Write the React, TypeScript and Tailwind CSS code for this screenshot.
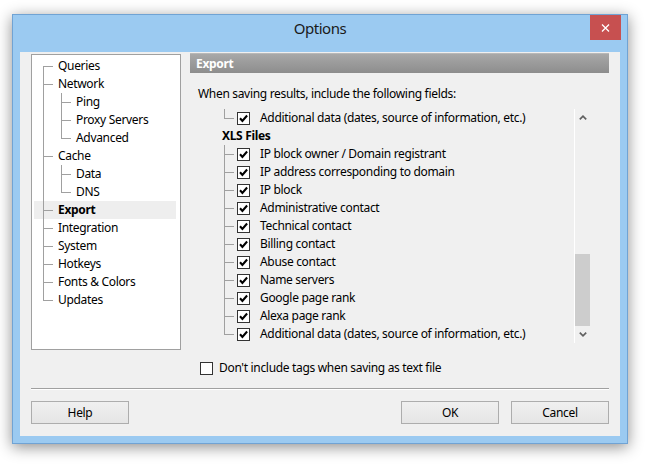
import React from 'react';

const line = 'absolute bg-[#a0a0a0]';

function Branch({ up = true, down = true, tick = true, w }: { up?: boolean; down?: boolean; tick?: boolean; w: string }) {
  return (
    <div className={`relative h-full shrink-0 ${w}`}>
      {up && <span className={`${line} left-0 top-0 h-1/2 w-px`} />}
      {down && <span className={`${line} left-0 top-1/2 h-1/2 w-px`} />}
      {tick && <span className={`${line} left-0 top-1/2 h-px w-[10px]`} />}
    </div>
  );
}

function Check({ checked = true }: { checked?: boolean }) {
  return (
    <div className="w-[13px] h-[13px] shrink-0 border border-[#333333] bg-white flex items-center justify-center">
      {checked && (
        <svg width="11" height="11" viewBox="0 0 11 11">
          <polyline points="2,5.2 4.4,7.9 9.1,2.5" fill="none" stroke="#000" strokeWidth="2.1" />
        </svg>
      )}
    </div>
  );
}

type TreeNode = { label: string; children?: string[] };

const tree: TreeNode[] = [
  { label: 'Queries' },
  { label: 'Network', children: ['Ping', 'Proxy Servers', 'Advanced'] },
  { label: 'Cache', children: ['Data', 'DNS'] },
  { label: 'Export' },
  { label: 'Integration' },
  { label: 'System' },
  { label: 'Hotkeys' },
  { label: 'Fonts & Colors' },
  { label: 'Updates' },
];

const xlsFields = [
  'IP block owner / Domain registrant',
  'IP address corresponding to domain',
  'IP block',
  'Administrative contact',
  'Technical contact',
  'Billing contact',
  'Abuse contact',
  'Name servers',
  'Google page rank',
  'Alexa page rank',
  'Additional data (dates, source of information, etc.)',
];

function TreePanel() {
  return (
    <div className="mt-px w-[150px] h-[296px] shrink-0 border border-[#a0a0a0] bg-white pt-[2px]">
      {tree.map((node, i) => {
        const first = i === 0;
        const last = i === tree.length - 1;
        const selected = node.label === 'Export';
        return (
          <React.Fragment key={node.label}>
            <div className={`ml-[2px] mr-[4px] h-[18px] flex items-center pl-[9px] ${selected ? 'bg-[#eeeeee]' : ''}`}>
              <Branch up={!first} down={!last} w="w-[15px]" />
              <span className={selected ? 'font-bold' : ''}>{node.label}</span>
            </div>
            {node.children?.map((c, j) => (
              <div key={c} className="ml-[2px] mr-[4px] h-[18px] flex items-center pl-[9px]">
                <Branch tick={false} w="w-[18px]" />
                <Branch down={j < node.children!.length - 1} w="w-[15px]" />
                <span>{c}</span>
              </div>
            ))}
          </React.Fragment>
        );
      })}
    </div>
  );
}

function FieldRow({ label, lastChild }: { label: string; lastChild?: boolean }) {
  return (
    <div className="h-[18px] flex items-center pl-[34px]">
      <Branch down={!lastChild} w="w-[13px]" />
      <Check />
      <span className="ml-[10px] whitespace-nowrap">{label}</span>
    </div>
  );
}

function Scrollbar() {
  return (
    <div className="w-[16px] shrink-0 border-l border-white flex flex-col">
      <div className="h-[17px] flex items-center justify-center">
        <svg width="8" height="5" viewBox="0 0 8 5">
          <path d="M0.8 4.4 L4 1.2 L7.2 4.4" fill="none" stroke="#606060" strokeWidth="1.7" />
        </svg>
      </div>
      <div className="flex-1 flex flex-col justify-end">
        <div className="h-[72px] bg-[#cdcdcd]" />
      </div>
      <div className="h-[17px] flex items-center justify-center">
        <svg width="8" height="5" viewBox="0 0 8 5">
          <path d="M0.8 0.6 L4 3.8 L7.2 0.6" fill="none" stroke="#606060" strokeWidth="1.7" />
        </svg>
      </div>
    </div>
  );
}

function Button({ children }: { children: React.ReactNode }) {
  return (
    <div className="w-[98px] h-[23px] border border-[#adadad] bg-linear-to-b from-[#f0f0f0] to-[#e5e5e5] flex items-center justify-center">
      {children}
    </div>
  );
}

export default function App() {
  return (
    <div className="relative w-[648px] h-[464px] overflow-hidden bg-white pl-[12px] pt-[14px] font-['Noto_Sans','Open_Sans',sans-serif] text-[12px] leading-[18px] tracking-[-0.32px] text-black">
      <div className="relative w-[616px] h-[430px] border border-[#70a3d4] bg-[#9bcaf1] flex flex-col shadow-[0_3px_14px_rgba(0,0,0,0.45)]">
        {/* title bar */}
        <div className="h-[37px] shrink-0 pt-[3px] text-center text-[15px] leading-[20px] tracking-[-0.5px] text-[#1a1a1a]">
          Options
        </div>
        <div className="absolute top-0 right-[6px] w-[31px] h-[25px] bg-[#c75050] flex items-center justify-center">
          <svg width="9" height="8" viewBox="0 0 9 8">
            <path d="M1 0.5 L8 7.5 M8 0.5 L1 7.5" stroke="#fff" strokeWidth="1.3" />
          </svg>
        </div>

        {/* client */}
        <div className="flex-1 mx-[7px] mb-[7px] bg-[#f0f0f0] px-[11px] pt-px flex flex-col">
          <div className="flex gap-[9px] items-start">
            <TreePanel />

            <div className="w-[419px] shrink-0">
              <div className="h-[20px] border-t border-[#b8b8b8] bg-linear-to-b from-[#a8a8a8] to-[#8d8d8d] pl-[6px] text-white font-bold leading-[19px]">
                Export
              </div>
              <div className="mt-[12px] pl-[8px]">When saving results, include the following fields:</div>

              <div className="mt-[6px] w-[400px] h-[234px] flex">
                <div className="flex-1 overflow-hidden">
                  <FieldRow label="Additional data (dates, source of information, etc.)" lastChild />
                  <div className="h-[18px] flex items-center pl-[32px] font-bold">XLS Files</div>
                  {xlsFields.map((f, i) => (
                    <FieldRow key={f} label={f} lastChild={i === xlsFields.length - 1} />
                  ))}
                </div>
                <Scrollbar />
              </div>

              <div className="mt-[16px] h-[18px] flex items-center pl-[10px] gap-[6px]">
                <Check checked={false} />
                <span>Don't include tags when saving as text file</span>
              </div>
            </div>
          </div>

          <div className="mt-[11px] border-t border-[#a0a0a0] border-b border-b-white" />

          <div className="mt-[11px] flex justify-between">
            <Button>Help</Button>
            <div className="flex gap-[12px]">
              <Button>OK</Button>
              <Button>Cancel</Button>
            </div>
          </div>
        </div>
      </div>
    </div>
  );
}
